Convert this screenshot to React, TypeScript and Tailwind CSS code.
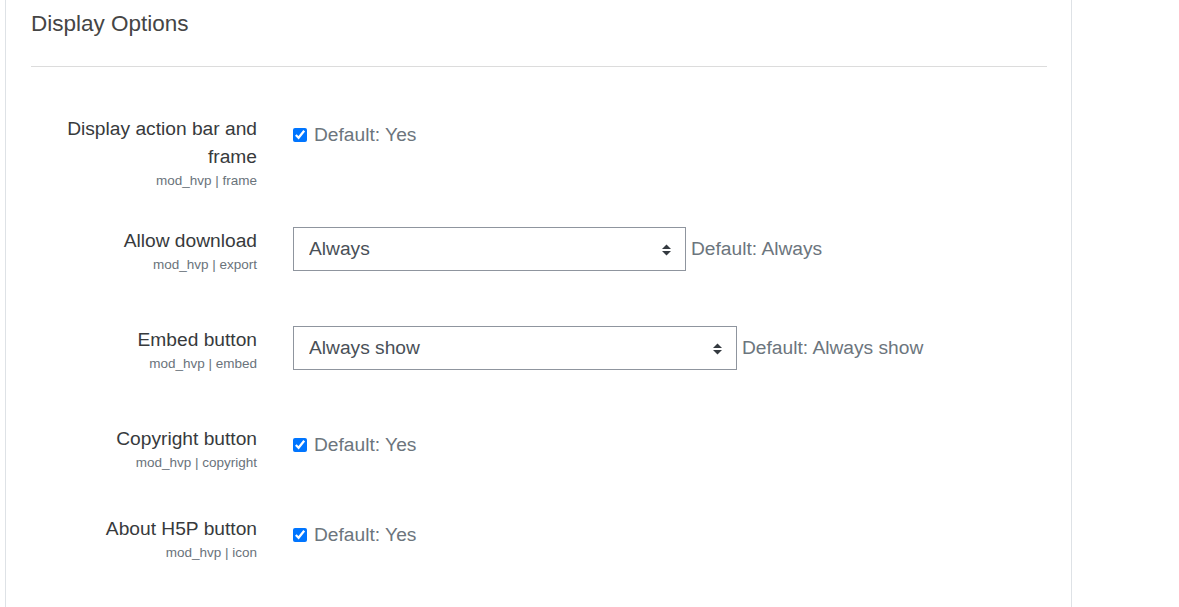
import React from "react"

type Row =
  | { kind: "check"; label: string; short: string; mt: string }
  | { kind: "select"; label: string; short: string; mt: string; value: string; width: string }

const rows: Row[] = [
  { kind: "check", label: "Display action bar and frame", short: "mod_hvp | frame", mt: "mt-[48px]" },
  { kind: "select", label: "Allow download", short: "mod_hvp | export", mt: "mt-[37px]", value: "Always", width: "w-[393px]" },
  { kind: "select", label: "Embed button", short: "mod_hvp | embed", mt: "mt-[52px]", value: "Always show", width: "w-[444px]" },
  { kind: "check", label: "Copyright button", short: "mod_hvp | copyright", mt: "mt-[52px]" },
  { kind: "check", label: "About H5P button", short: "mod_hvp | icon", mt: "mt-[43px]" },
]

function SelectArrow() {
  return (
    <svg width="9" height="12" viewBox="0 0 9 12" className="absolute right-[15px] top-[17px] pointer-events-none">
      <path d="M4.5 0.5 L9 5 H0 Z" fill="#343a40" />
      <path d="M4.5 11.5 L9 7 H0 Z" fill="#343a40" />
    </svg>
  )
}

export default function App() {
  return (
    <div className="min-h-screen bg-white font-['Liberation_Sans',Arial,sans-serif]">
      <div className="ml-[5px] w-[1067px] min-h-[607px] border-x border-[#dee2e6] pl-[25px] pr-[24px]">
        <h3 className="pt-[11px] text-[22.5px] leading-[26px] text-[#454545]">Display Options</h3>
        <div className="mt-[29px] border-t border-[#dcdcdc]" />

        {rows.map((row) => (
          <div key={row.label} className={`flex items-start ${row.mt}`}>
            <div className="w-[226px] shrink-0 text-right">
              <div className="text-[19.2px] leading-[28px] text-[#373a3c]">{row.label}</div>
              <div className="pt-[1px] text-[13.5px] leading-[18px] text-[#6a737b]">{row.short}</div>
            </div>
            <div className="ml-[36px] flex-1">
              {row.kind === "check" ? (
                <div className="flex items-center pt-[6px] text-[19.2px] leading-[28px] text-[#6c757d]">
                  <input
                    type="checkbox"
                    defaultChecked
                    className="m-0 h-[14px] w-[14px] accent-[#0075ff]"
                  />
                  <span className="ml-[7px]">Default: Yes</span>
                </div>
              ) : (
                <div className="flex items-center">
                  <div className={`relative ${row.width}`}>
                    <select
                      defaultValue={row.value}
                      className="h-[44px] w-full appearance-none rounded-none border border-[#8f959e] bg-white pl-[15px] pr-[32px] text-[19.2px] text-[#495057] outline-none"
                    >
                      <option>{row.value}</option>
                    </select>
                    <SelectArrow />
                  </div>
                  <span className="ml-[5px] text-[19.2px] leading-[28px] text-[#6c757d]">Default: {row.value}</span>
                </div>
              )}
            </div>
          </div>
        ))}
      </div>
    </div>
  )
}
